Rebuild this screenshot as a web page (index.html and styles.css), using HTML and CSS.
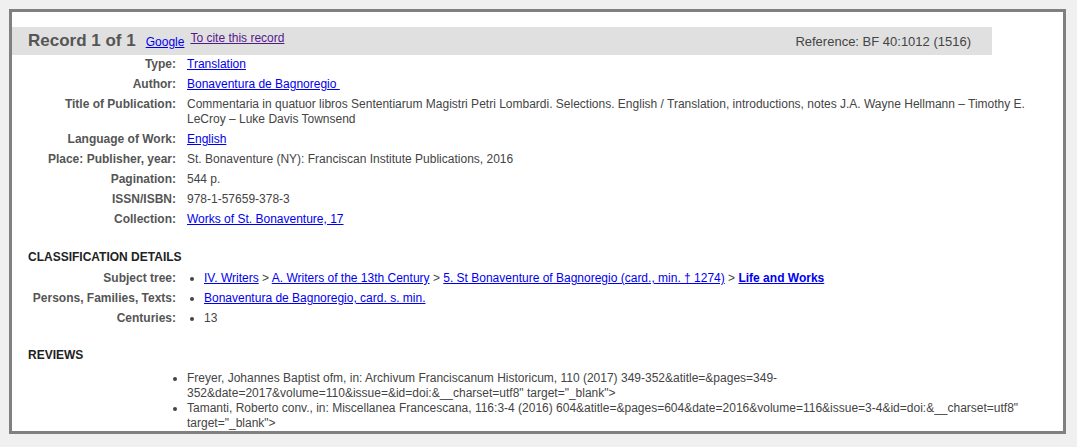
FILE: index.html
```html
<!DOCTYPE html>
<html lang="en">

<head>
    <meta charset="UTF-8">
    <title>Record 1 of 1</title>
    <link rel="stylesheet" href="styles.css">
</head>

<body>
    <div class="record">
        <div class="record-head">
            <span class="record-title">Record 1 of 1</span>
            <a class="head-link" href="#">Google</a>
            <a class="head-link cite" href="#">To cite this record</a>
            <span class="record-ref">Reference: BF 40:1012 (1516)</span>
        </div>
        <div class="record-body">
            <table class="fields">
                <tr>
                    <td class="label">Type:</td>
                    <td class="value"><a href="#">Translation</a></td>
                </tr>
                <tr>
                    <td class="label">Author:</td>
                    <td class="value"><a href="#">Bonaventura de Bagnoregio&nbsp;</a></td>
                </tr>
                <tr>
                    <td class="label">Title of Publication:</td>
                    <td class="value">Commentaria in quatuor libros Sententiarum Magistri Petri Lombardi. Selections. English / Translation, introductions, notes J.A. Wayne Hellmann – Timothy E. LeCroy – Luke Davis Townsend</td>
                </tr>
                <tr>
                    <td class="label">Language of Work:</td>
                    <td class="value"><a href="#">English</a></td>
                </tr>
                <tr>
                    <td class="label">Place: Publisher, year:</td>
                    <td class="value">St. Bonaventure (NY): Franciscan Institute Publications, 2016</td>
                </tr>
                <tr>
                    <td class="label">Pagination:</td>
                    <td class="value">544 p.</td>
                </tr>
                <tr>
                    <td class="label">ISSN/ISBN:</td>
                    <td class="value">978-1-57659-378-3</td>
                </tr>
                <tr>
                    <td class="label">Collection:</td>
                    <td class="value"><a href="#">Works of St. Bonaventure, 17</a></td>
                </tr>
            </table>

            <h3 class="section-title">CLASSIFICATION DETAILS</h3>
            <table class="fields">
                <tr>
                    <td class="label">Subject tree:</td>
                    <td class="value">
                        <ul class="bullets">
                            <li><a href="#">IV. Writers</a> &gt; <a href="#">A. Writers of the 13th Century</a> &gt; <a href="#">5. St Bonaventure of Bagnoregio (card., min. † 1274)</a> &gt; <a href="#"><b>Life and Works</b></a></li>
                        </ul>
                    </td>
                </tr>
                <tr>
                    <td class="label">Persons, Families, Texts:</td>
                    <td class="value">
                        <ul class="bullets">
                            <li><a href="#">Bonaventura de Bagnoregio, card. s. min.</a></li>
                        </ul>
                    </td>
                </tr>
                <tr>
                    <td class="label">Centuries:</td>
                    <td class="value">
                        <ul class="bullets">
                            <li>13</li>
                        </ul>
                    </td>
                </tr>
            </table>

            <h3 class="section-title reviews-title">REVIEWS</h3>
            <ul class="reviews">
                <li>Freyer, Johannes Baptist ofm, in: Archivum Franciscanum Historicum, 110 (2017) 349-352&amp;atitle=&amp;pages=349-352&amp;date=2017&amp;volume=110&amp;issue=&amp;id=doi:&amp;__charset=utf8" target="_blank"&gt;</li>
                <li>Tamanti, Roberto conv., in: Miscellanea Francescana, 116:3-4 (2016) 604&amp;atitle=&amp;pages=604&amp;date=2016&amp;volume=116&amp;issue=3-4&amp;id=doi:&amp;__charset=utf8" target="_blank"&gt;</li>
            </ul>
        </div>
    </div>
</body>

</html>
```

FILE: styles.css
```css
* {
    padding: 0;
    margin: 0;
    box-sizing: border-box;
}

body {
    background-color: #f0f0f0;
    font-family: "Liberation Sans", Arial, sans-serif;
    font-size: 12px;
    line-height: 15px;
    color: #444;
}

a {
    color: #0000ee;
}

a.cite {
    color: #551a8b;
}

.record {
    margin: 9px 11px 0 9px;
    padding-top: 15px;
    background-color: #fff;
    border: 3px solid #808080;
}

/* grey title bar */
.record-head {
    display: flex;
    align-items: baseline;
    width: 980px;
    height: 28px;
    padding: 0 21px 0 16px;
    background-color: #e0e0e0;
}

.record-title {
    font-size: 17px;
    line-height: 28px;
    font-weight: bold;
    color: #555;
}

.head-link {
    margin-left: 10px;
}

.head-link.cite {
    margin-left: 6px;
    position: relative;
    top: -4px;
}

.record-ref {
    margin-left: auto;
    font-size: 13px;
    color: #444;
}

.record-body {
    padding: 0 16px;
}

.fields {
    width: 100%;
    border-collapse: collapse;
}

.fields td {
    vertical-align: top;
    padding-top: 2px;
    padding-bottom: 3px;
}

.fields .label {
    width: 152px;
    padding-right: 4px;
    text-align: right;
    font-weight: bold;
    color: #555;
    white-space: nowrap;
}

.fields .value {
    padding-left: 7px;
}

.section-title {
    margin: 20px 0 4px;
    font-size: 12px;
    line-height: 15px;
    color: #222;
}

.reviews-title {
    margin: 19px 0 8px;
}

.bullets {
    padding-left: 17px;
}

.reviews {
    padding-left: 159px;
}
```
